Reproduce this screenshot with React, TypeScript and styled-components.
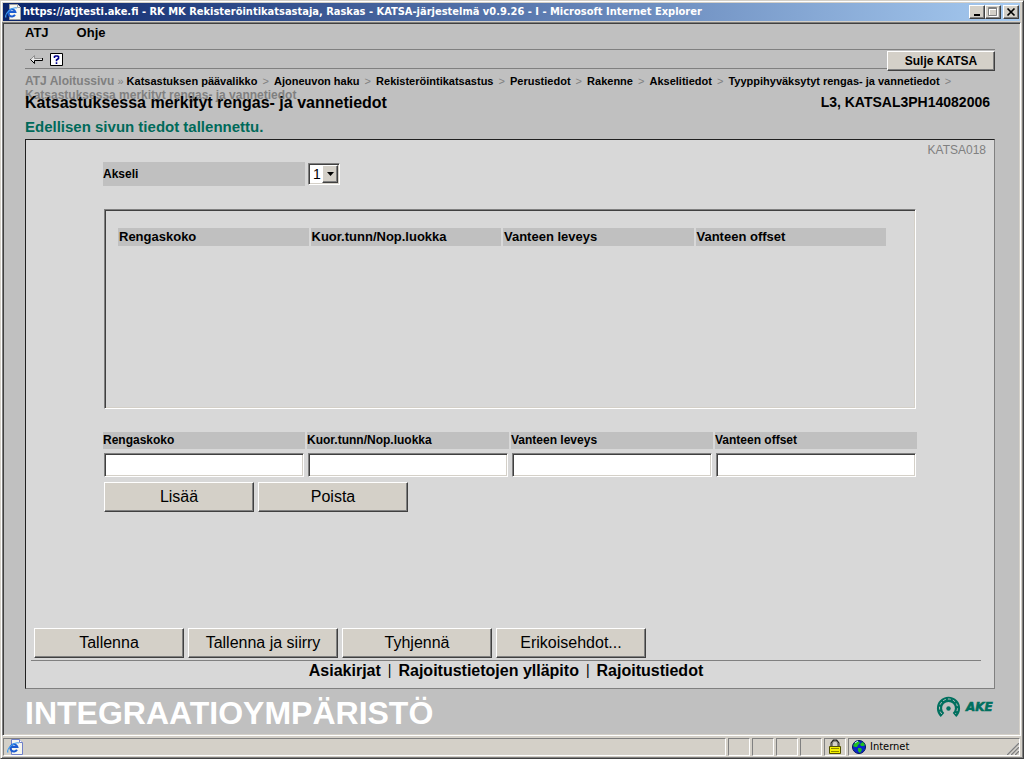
import React from "react";
import styled, { createGlobalStyle, css } from "styled-components";

const face = "#d4d0c8";
const shade = "#808080";
const dark = "#404040";
const brandGreen = "#00705f";

const sans = `"Liberation Sans", Arial, sans-serif`;
const system = `"DejaVu Sans Condensed", Tahoma, sans-serif`;

const raised = css`
  border: 1px solid;
  border-color: #fff ${dark} ${dark} #fff;
  box-shadow: inset -1px -1px 0 ${shade};
`;

const sunken = css`
  border: 1px solid;
  border-color: ${shade} #fff #fff ${shade};
  box-shadow: inset 1px 1px 0 ${dark}, inset -1px -1px 0 ${face};
`;

const GlobalStyle = createGlobalStyle`
  *, *::before, *::after { box-sizing: border-box; }
  body { margin: 0; font-family: ${sans}; color: #000; background: ${face}; }
  button, input, select { font-family: inherit; color: inherit; margin: 0; }
  a { color: inherit; text-decoration: none; }
`;

const Window = styled.div`
  display: flex;
  flex-direction: column;
  min-height: 100vh;
  padding: 1px 2px 1px 1px;
  background: ${face};
  border: 1px solid;
  border-color: ${face} ${dark} ${dark} ${face};
  box-shadow: inset 1px 1px 0 #fff, inset -1px -1px 0 ${shade};
`;

const TitleBar = styled.header`
  display: flex;
  align-items: center;
  height: 18px;
  margin: 1px;
  padding: 0 1px 0 2px;
  gap: 2px;
  background: linear-gradient(90deg, #0a246a, #a6caf0);
`;

const TitleText = styled.h1`
  flex: 1;
  margin: 0;
  font: bold 11px/18px ${system};
  color: #fff;
  white-space: nowrap;
  overflow: hidden;
`;

const Controls = styled.div`
  display: flex;
`;

const ControlButton = styled.button<{ $apart?: boolean }>`
  ${raised}
  display: flex;
  width: 16px;
  height: 14px;
  padding: 1px;
  margin-left: ${(p) => (p.$apart ? 2 : 0)}px;
  background: ${face};
`;

const Page = styled.main`
  flex: 1;
  display: flex;
  flex-direction: column;
  padding: 2px 25px 0 22px;
  background: #c0c0c0;
  border: 1px solid;
  border-color: ${shade} #fff #fff ${shade};
  box-shadow: inset 1px 1px 0 ${dark}, inset -1px -1px 0 ${face};
`;

const MenuBar = styled.nav`
  display: flex;
  gap: 28px;
  height: 24px;
  font: bold 13px/16px ${sans};
`;

const Toolbar = styled.div`
  display: flex;
  align-items: flex-start;
  height: 20px;
  border: 1px solid ${shade};
  border-width: 1px 0;
`;

const ToolButton = styled.button`
  display: flex;
  align-items: center;
  height: 13px;
  padding: 0;
  margin: 3px 0 0 5px;
  background: none;
  border: 0;
`;

const CloseButton = styled.button`
  ${raised}
  width: 108px;
  height: 20px;
  margin: 1px 0 0 auto;
  padding: 0;
  background: ${face};
  font: bold 12px/16px ${sans};
`;

const Crumbs = styled.nav`
  height: 24px;
  padding-top: 5px;
  font: bold 12px/14px ${sans};
  color: ${shade};
  white-space: nowrap;
`;

const Crumb = styled.a`
  font-size: 11px;
  color: #000;
`;

const Sep = styled.span<{ $tight?: boolean }>`
  margin: 0 ${(p) => (p.$tight ? 0 : 2)}px;
  font-size: 11px;
  font-weight: normal;
`;

const HeadingRow = styled.div`
  display: flex;
  justify-content: space-between;
  align-items: flex-start;
  padding-right: 5px;
`;

const Heading = styled.h2`
  margin: 0;
  font: bold 16px/20px ${sans};
`;

const UserInfo = styled.div`
  font: bold 14px/18px ${sans};
`;

const Message = styled.p`
  margin: 5px 0 3px;
  font: bold 15px/18px ${sans};
  color: #006a5a;
`;

const Panel = styled.section`
  flex: 1;
  display: flex;
  flex-direction: column;
  background: #d8d8d8;
  border: 1px solid;
  border-color: #202020 ${shade} ${shade} #202020;
`;

const PageCode = styled.div`
  padding: 2px 8px 0 0;
  font: 12px/16px ${sans};
  color: ${shade};
  text-align: right;
`;

const Form = styled.form`
  display: flex;
  flex-direction: column;
  padding: 4px 77px 0;
`;

const Columns = styled.div`
  display: grid;
  grid-template-columns: repeat(4, 1fr);
  column-gap: 2px;
`;

const FieldLabel = styled.label<{ $tall?: boolean }>`
  background: #c0c0c0;
  font: bold 12px/${(p) => (p.$tall ? 24 : 17)}px ${sans};
`;

const SelectBox = styled.div`
  ${sunken}
  position: relative;
  justify-self: start;
  width: 32px;
  height: 22px;
  margin: 1px;
  background: #fff;
`;

const AxleSelect = styled.select`
  appearance: none;
  width: 100%;
  height: 100%;
  padding: 0 0 0 4px;
  background: none;
  border: 0;
  font: 14px/20px ${sans};
`;

const SelectArrow = styled.span`
  ${raised}
  position: absolute;
  top: 1px;
  right: 1px;
  bottom: 1px;
  display: flex;
  align-items: center;
  justify-content: center;
  width: 16px;
  background: ${face};
  pointer-events: none;
`;

const ListFrame = styled.div`
  ${sunken}
  height: 200px;
  margin: 23px 1px;
  padding: 16px 27px 0 11px;
`;

const ListTable = styled.table`
  width: 100%;
  table-layout: fixed;
  border-spacing: 2px;

  th {
    height: 18px;
    padding: 0 1px;
    background: #c0c0c0;
    font: bold 13px/18px ${sans};
    text-align: left;
  }
`;

const Field = styled.div`
  display: flex;
  flex-direction: column;
  gap: 4px;
`;

const TextInput = styled.input`
  ${sunken}
  height: 24px;
  margin: 0 1px;
  padding: 0 4px;
  min-width: 0;
  background: #fff;
  font: 14px/20px ${sans};
  outline: 0;
`;

const ButtonRow = styled.div`
  display: flex;
  gap: 4px;
`;

const ListButtons = styled(ButtonRow)`
  padding: 5px 1px 0;
`;

const Button = styled.button`
  ${raised}
  width: 150px;
  height: 30px;
  padding: 0;
  background: ${face};
  font: 16px/20px ${sans};
`;

const PanelFooter = styled.footer`
  margin: auto 13px 0 5px;
  padding-bottom: 8px;
`;

const ActionRow = styled(ButtonRow)`
  padding: 0 3px 2px;
  border-bottom: 1px solid ${shade};
`;

const LinkRow = styled.nav`
  display: flex;
  justify-content: center;
  gap: 7px;
  font: bold 16px/19px ${sans};
`;

const Bar = styled.span`
  font-size: 14px;
  font-weight: normal;
`;

const Brand = styled.div`
  display: flex;
  justify-content: space-between;
  align-items: flex-start;
  height: 46px;
  padding-top: 6px;
`;

const Environment = styled.div`
  font: bold 32px/36px ${sans};
  color: #fff;
`;

const LogoText = styled.text`
  font: italic bold 12px "DejaVu Sans", Verdana, sans-serif;
  fill: ${brandGreen};
  stroke: ${brandGreen};
  stroke-width: 0.6px;
`;

const StatusBar = styled.footer`
  display: flex;
  gap: 2px;
  height: 18px;
  margin: 2px 1px 1px;
`;

const StatusCell = styled.div<{ $width?: number }>`
  display: flex;
  align-items: center;
  flex: ${(p) => (p.$width ? `0 0 ${p.$width}px` : "1")};
  gap: 4px;
  padding: 0 0 0 3px;
  border: 1px solid;
  border-color: ${shade} #fff #fff ${shade};
  font: 11px/16px ${system};
`;

const Grip = styled.svg`
  align-self: flex-end;
  margin-left: auto;
`;

const PageIcon = ({ edge = "#a0a0a0" }: { edge?: string }) => (
  <svg width="16" height="16" viewBox="0 0 16 16" aria-hidden="true">
    <path d="M4.500.5h8l3 3v12h-11z" fill="#f6f6f0" stroke={edge} />
    <path d="M12.500.5v3h3" fill="#fff" stroke={edge} />
    <path d="M10 10.800A3.600 3.600 0 1 1 10.400 8H4" fill="none" stroke="#1c5cd0" strokeWidth="2" />
    <path d="M1 13.500C-1 10 7 2.500 12 4" fill="none" stroke="#3d9cf0" strokeWidth="1.200" />
  </svg>
);

const BackIcon = () => (
  <svg width="15" height="9" viewBox="0 0 15 9" aria-hidden="true">
    <path d="M1 4.500 4.500 1v2H13v2H4.500v3z" fill="#e8e8e8" />
    <path d="M.5 4.500 4.500.5v3h8" fill="none" stroke="#909090" />
    <path d="M.5 4.500 4.500 8.500v-3h8V3" fill="none" stroke="#000" />
  </svg>
);

const HelpIcon = () => (
  <svg width="13" height="13" viewBox="0 0 13 13" aria-hidden="true">
    <path d="M.5.5h12v12H.5z" fill="#fff" stroke="#000" />
    <path d="M4.500 5V3.500L5.500 3h2l1 .5v2l-2 1.500v1.200M6.500 9.200V11" fill="none" stroke="#00008b" strokeWidth="1.600" />
  </svg>
);

const LockIcon = () => (
  <svg width="14" height="16" viewBox="0 0 14 16" aria-hidden="true">
    <path d="M3.500 8V4L5.500 1.500h3L10.500 4v4" fill="none" stroke="#202020" strokeWidth="2" />
    <path d="M3.800 8V4.200L5.800 2h2.400L10.200 4.200V8" fill="none" stroke="#c8c4b0" strokeWidth=".6" />
    <path d="M1.500 7.500h11v7h-11z" fill="#f4f000" stroke="#505000" />
    <path d="M3 9.500h8M3 12.500h8" stroke="#8c8800" />
  </svg>
);

const GlobeIcon = () => (
  <svg width="14" height="14" viewBox="0 0 14 14" aria-hidden="true">
    <circle cx="7" cy="7" r="6.500" fill="#0a28c8" stroke="#001060" />
    <path d="M1 6 3 2.500 6 1l2 2-2 2-1 2H3zM8 4l3-2 2 3-1 1H9zM6 8h3l1 2-2 3-2-2z" fill="#20c020" />
    <path d="M3 3 6 1" stroke="#c0f8ff" />
  </svg>
);

const AkeLogo = () => (
  <svg width="59" height="24" viewBox="0 0 59 24" role="img" aria-label="AKE">
    <g fill="none">
      <path d="M6.500 20A9 9 0 1 1 18.500 20" stroke={brandGreen} strokeWidth="5.200" />
      <path d="M5.800 19A9 9 0 1 1 19.200 19" stroke="#c0c0c0" strokeWidth="1" strokeDasharray="2.800 2.200" />
    </g>
    <circle cx="12.500" cy="13.500" r="2.200" fill={brandGreen} />
    <LogoText x="30" y="16">AKE</LogoText>
  </svg>
);

const crumbs = [
  "Katsastuksen päävalikko",
  "Ajoneuvon haku",
  "Rekisteröintikatsastus",
  "Perustiedot",
  "Rakenne",
  "Akselitiedot",
  "Tyyppihyväksytyt rengas- ja vannetiedot",
];

const fields = ["Rengaskoko", "Kuor.tunn/Nop.luokka", "Vanteen leveys", "Vanteen offset"];

export default function App() {
  return (
    <Window>
      <GlobalStyle />
      <TitleBar>
        <PageIcon />
        <TitleText>
          https://atjtesti.ake.fi - RK MK Rekisteröintikatsastaja, Raskas - KATSA-järjestelmä v0.9.26 - I - Microsoft Internet Explorer
        </TitleText>
        <Controls>
          <ControlButton aria-label="Minimize">
            <svg width="12" height="10" viewBox="0 0 12 10"><path d="M3 8h6" stroke="#000" strokeWidth="2" /></svg>
          </ControlButton>
          <ControlButton aria-label="Maximize">
            <svg width="12" height="10" viewBox="0 0 12 10">
              <path d="M2.500 1.500h8v8h-8zM2 2.500h9" fill="none" stroke="#fff" />
              <path d="M1.500.5h8v8h-8zM1 1.500h9" fill="none" stroke="#808080" />
            </svg>
          </ControlButton>
          <ControlButton aria-label="Close" $apart>
            <svg width="12" height="10" viewBox="0 0 12 10"><path d="m2.500 1.500 7 7m0-7-7 7" stroke="#000" strokeWidth="1.700" /></svg>
          </ControlButton>
        </Controls>
      </TitleBar>

      <Page>
        <MenuBar>
          <a href="#atj">ATJ</a>
          <a href="#ohje">Ohje</a>
        </MenuBar>
        <Toolbar>
          <ToolButton aria-label="Takaisin"><BackIcon /></ToolButton>
          <ToolButton aria-label="Ohje"><HelpIcon /></ToolButton>
          <CloseButton>Sulje KATSA</CloseButton>
        </Toolbar>
        <Crumbs>
          <a href="#aloitus">ATJ Aloitussivu</a>
          <Sep $tight> » </Sep>
          {crumbs.map((c) => (
            <React.Fragment key={c}>
              <Crumb href="#sivu">{c}</Crumb>
              <Sep> &gt; </Sep>
            </React.Fragment>
          ))}
          <br />
          Katsastuksessa merkityt rengas- ja vannetiedot
        </Crumbs>
        <HeadingRow>
          <Heading>Katsastuksessa merkityt rengas- ja vannetiedot</Heading>
          <UserInfo>L3, KATSAL3PH14082006</UserInfo>
        </HeadingRow>
        <Message>Edellisen sivun tiedot tallennettu.</Message>

        <Panel>
          <PageCode>KATSA018</PageCode>
          <Form onSubmit={(e) => e.preventDefault()}>
            <Columns>
              <FieldLabel htmlFor="akseli" $tall>Akseli</FieldLabel>
              <SelectBox>
                <AxleSelect id="akseli" defaultValue="1">
                  <option>1</option>
                  <option>2</option>
                </AxleSelect>
                <SelectArrow>
                  <svg width="7" height="4" viewBox="0 0 7 4"><path d="M0 0h7L3.500 4z" /></svg>
                </SelectArrow>
              </SelectBox>
            </Columns>
            <ListFrame>
              <ListTable>
                <thead>
                  <tr>{fields.map((f) => <th key={f} scope="col">{f}</th>)}</tr>
                </thead>
              </ListTable>
            </ListFrame>
            <Columns>
              {fields.map((f, i) => (
                <Field key={f}>
                  <FieldLabel htmlFor={`kentta-${i}`}>{f}</FieldLabel>
                  <TextInput id={`kentta-${i}`} type="text" />
                </Field>
              ))}
            </Columns>
            <ListButtons>
              <Button type="button">Lisää</Button>
              <Button type="button">Poista</Button>
            </ListButtons>
          </Form>
          <PanelFooter>
            <ActionRow>
              <Button>Tallenna</Button>
              <Button>Tallenna ja siirry</Button>
              <Button>Tyhjennä</Button>
              <Button>Erikoisehdot...</Button>
            </ActionRow>
            <LinkRow>
              <a href="#asiakirjat">Asiakirjat</a>
              <Bar>|</Bar>
              <a href="#yllapito">Rajoitustietojen ylläpito</a>
              <Bar>|</Bar>
              <a href="#rajoitus">Rajoitustiedot</a>
            </LinkRow>
          </PanelFooter>
        </Panel>

        <Brand>
          <Environment>INTEGRAATIOYMPÄRISTÖ</Environment>
          <AkeLogo />
        </Brand>
      </Page>

      <StatusBar>
        <StatusCell><PageIcon edge="#7080c8" /></StatusCell>
        <StatusCell $width={22} />
        <StatusCell $width={22} />
        <StatusCell $width={22} />
        <StatusCell $width={22} />
        <StatusCell $width={22}><LockIcon /></StatusCell>
        <StatusCell $width={172}>
          <GlobeIcon />
          Internet
          <Grip width="12" height="12" viewBox="0 0 12 12">
            <path d="M-1 12 12-1M3 12l9-9M7 12l5-5" stroke="#fff" />
            <path d="M0 12 12 0M4 12l8-8M8 12l4-4" stroke="#808080" strokeWidth="1.500" />
          </Grip>
        </StatusCell>
      </StatusBar>
    </Window>
  );
}
